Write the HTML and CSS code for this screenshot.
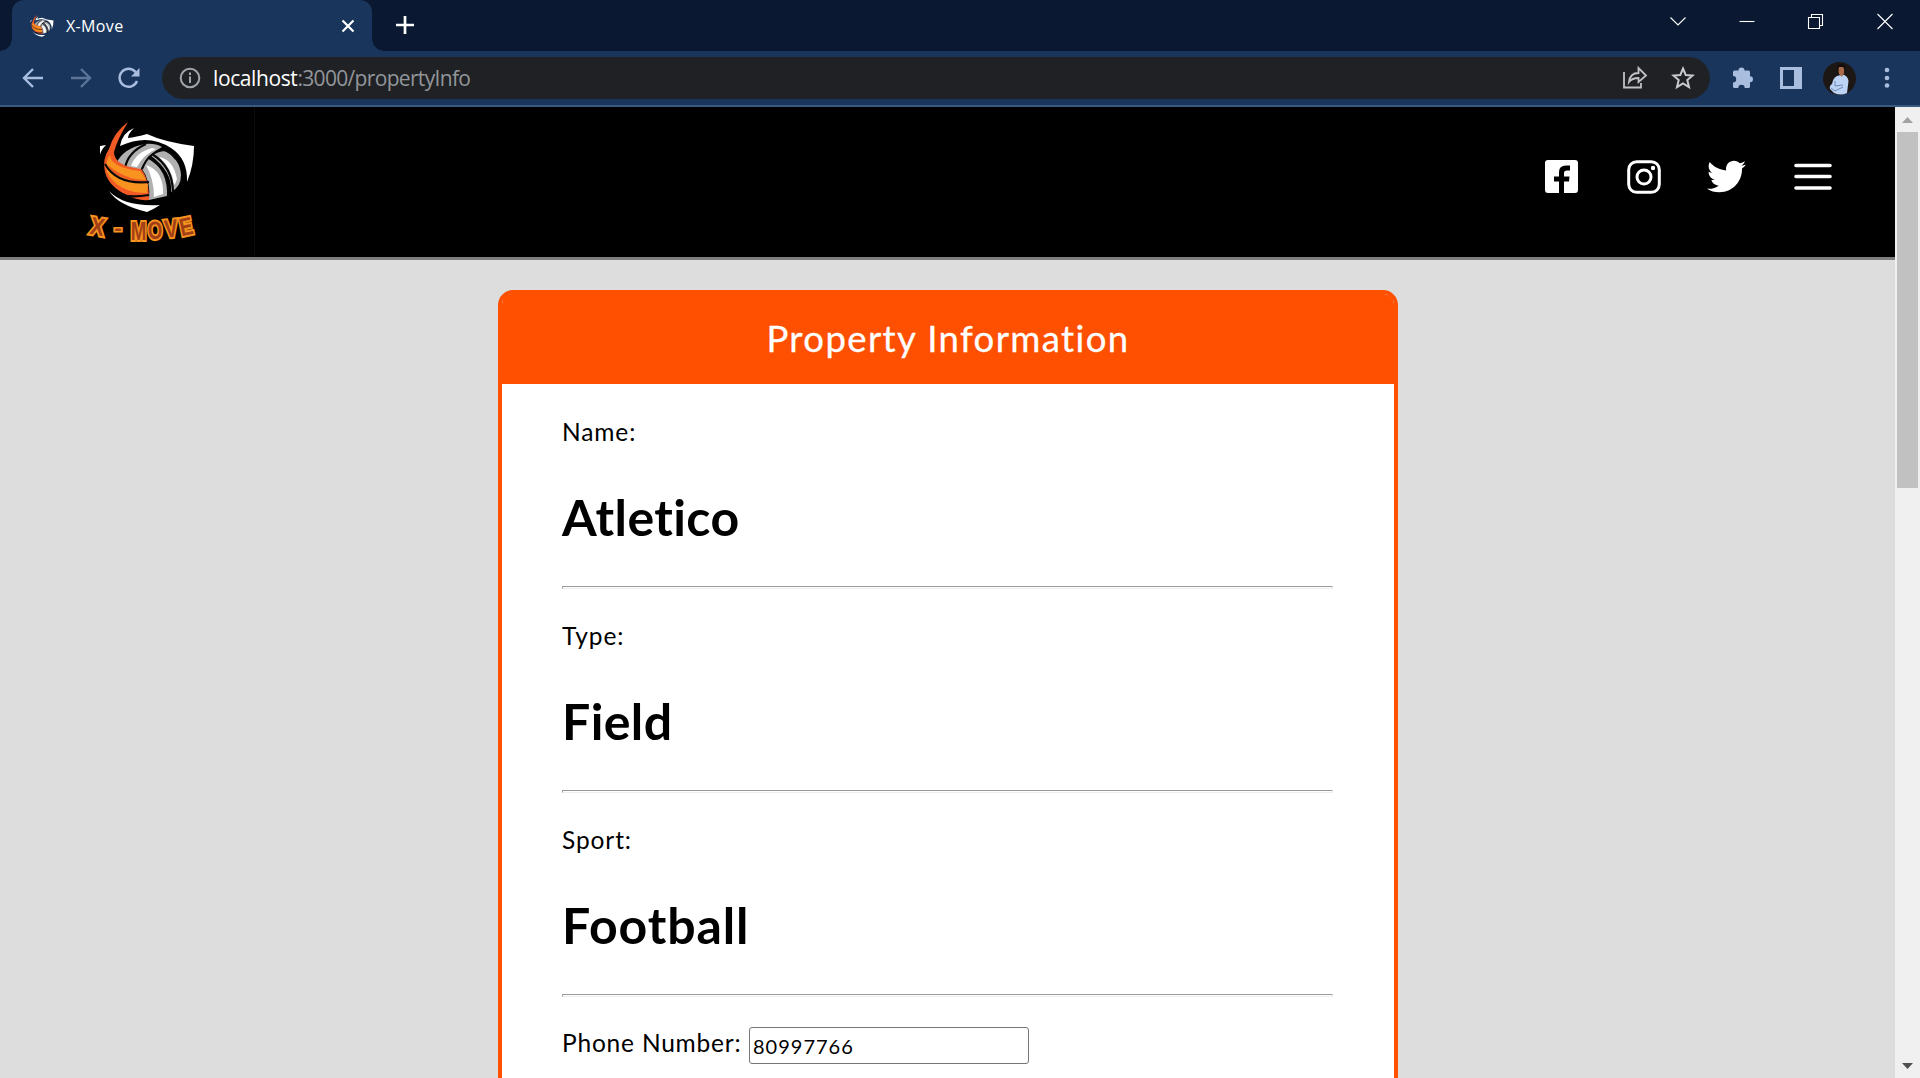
FILE: index.html
```html
<!DOCTYPE html>
<html lang="en">
<head>
<meta charset="utf-8">
<title>X-Move</title>
<link rel="stylesheet" href="styles.css">
</head>
<body>
<svg class="defs" width="0" height="0" aria-hidden="true">
  <symbol id="ball" viewBox="98 118 98 98">
    <path fill="#fff" d="M120 145Q122 132 134 127Q128 133 128 137Q136 136 147 133Q164 141 194 145Q194 164 187 181Q188 158 171 147Q148 132 120 145ZM100 145L106 144Q101 149 100 154ZM109 190Q124 206 160 204Q154 208 147 211Q118 204 109 190Z"/>
    <path fill="#b0b0b0" d="M116 163Q123 147 145 143Q155 142 162 146Q148 153 141 168Q128 169 116 163ZM150 154L163 149Q180 157 181 174Q181 186 171 191Q173 171 150 154ZM142 168L147 157Q171 170 167 195L149 199Q151 180 142 168Z"/>
    <path fill="#fff" d="M131 165Q136 151 152 147L156 148Q143 154 137 166ZM159 156Q173 158 177 178Q176 182 174 184Q172 167 159 156ZM146 164Q164 170 163 193L154 196Q154 178 146 164Z"/>
    <path fill="none" stroke="#080808" stroke-width="2.200" d="M125 167Q128 151 146 143M142 168Q149 150 165 149M148 156Q170 168 168 197M152 153Q173 166 173 192M164 149Q170 150 176 158"/>
    <path fill="#f15a24" d="M128 121Q118 137 114 151Q114 165 141 168Q149 177 149 199Q137 200 127 194Q109 186 105 171Q102 158 109 148Q114 131 128 121Z"/>
    <path fill="#f7931e" d="M110 154Q110 166 140 170Q144 174 146 179Q125 179 108 164Q111 177 148 183L147 192Q118 192 107 171Q105 160 110 154Z"/>
    <path fill="none" stroke="#080808" stroke-width="2.200" d="M105 163Q117 184 149 181M117 193Q130 197 149 194"/>
  </symbol>
</svg>

<div class="tabstrip">
  <div class="tab">
    <svg class="favicon"><use href="#ball"/></svg>
    <span class="tab-title">X-Move</span>
    <svg class="tab-close" viewBox="0 0 14 14"><path d="M1.5 1.500L12.500 12.500M12.500 1.500L1.500 12.500"/></svg>
  </div>
  <svg class="new-tab" viewBox="0 0 18 18"><path d="M9 0V18M0 9H18"/></svg>
  <div class="window-buttons">
    <svg viewBox="0 0 16 16"><path d="M.5 4.500L8 12L15.500 4.500"/></svg>
    <svg viewBox="0 0 16 16"><path d="M.5 8.500H15.500"/></svg>
    <svg viewBox="0 0 16 16"><path d="M.5 4.500H11.500V15.500H.5ZM3.500 4V1.500H14.500V12.500H12"/></svg>
    <svg viewBox="0 0 16 16"><path d="M.5 1L15.500 16M15.500 1L.5 16"/></svg>
  </div>
</div>

<div class="toolbar">
  <div class="nav">
    <svg viewBox="0 0 20 20"><path d="M20 10H1.500M10 1L1 10L10 19"/></svg>
    <svg class="dim" viewBox="0 0 20 20"><path d="M0 10H18.500M10 1L19 10L10 19"/></svg>
    <svg viewBox="0 0 20 20"><path d="M18 13A9 9 0 1 1 16.500 4L18 6"/><path class="solid" d="M20.500 0V8.500H12Z"/></svg>
  </div>
  <div class="omnibox">
    <svg class="info" viewBox="0 0 22 22"><circle cx="11" cy="11" r="9.300"/><path d="M11 9.500V16M11 5.500V8"/></svg>
    <div class="url"><span class="host">localhost</span>:3000/propertyInfo</div>
    <svg class="share" viewBox="0 0 24 24"><path d="M1 6V21.500H18V17M6 16Q7 7 15.500 7V2L23 9.500L15.500 16V12Q9 12 6 16Z"/></svg>
    <svg class="star" viewBox="0 0 24 24"><path d="M12 2.500L14.700 9L21.500 9.500L16.300 14L18 21L12 17.300L6 21L7.700 14L2.500 9.500L9.300 9Z"/></svg>
  </div>
  <svg class="puzzle" viewBox="0 0 22 22"><path d="M2.500 3.500H6.500A3 3 0 0 1 12.500 3.500H16.500Q18 3.500 18 5V9.300A3 3 0 0 1 18 15.300V19.500Q18 21 16.500 21H12.700A3.200 3.200 0 0 0 6.300 21H2.500Q1 21 1 19.500V15.500A3.200 3.200 0 0 0 1 9.100V5Q1 3.500 2.500 3.500Z"/></svg>
  <svg class="panel" viewBox="0 0 22 22"><path d="M0 0H22V22H0ZM3 3V19H14V3Z"/></svg>
  <svg class="avatar" viewBox="0 0 33 33">
    <circle cx="16.500" cy="16.500" r="16.500" fill="#1c1714"/>
    <path fill="#bcd3f6" d="M14 14L20 12.500Q25 14 25.500 19L24 31Q18 34 11 31L7 27Q6 24 9 22Q10 16 14 14Z"/>
    <path fill="#a96b4c" d="M15 5H21V11L19 15L16 12Z"/>
    <path fill="#120c0a" d="M14 7Q14 2 19 2Q23 3 22 8L20 5H16L15 9Z"/>
    <path fill="none" stroke="#7188b3" d="M12 19L12 24L20 23M8 26L12 29L20 25"/>
  </svg>
  <svg class="dots" viewBox="0 0 6 22"><circle cx="3" cy="3" r="2.300"/><circle cx="3" cy="11" r="2.300"/><circle cx="3" cy="18.500" r="2.300"/></svg>
</div>

<div class="viewport">
  <div class="page">
    <header class="site-header">
      <div class="brand">
        <svg class="logo"><use href="#ball"/></svg>
        <div class="wordmark"><span class="w1">X</span><span class="w2">-</span><span class="w3">M</span><span class="w4">O</span><span class="w5">V</span><span class="w6">E</span></div>
      </div>
      <nav class="social">
        <svg class="fb" viewBox="0 0 33 33"><path d="M3 0H30Q33 0 33 3V30Q33 33 30 33H19V21.500H24L24.500 16.500H19V13Q19 10.500 22 10.500H25V5.500H21Q14 5.500 14 12V16.500H9V21.500H14V33H3Q0 33 0 30V3Q0 0 3 0Z"/></svg>
        <svg class="ig" viewBox="0 0 34 34"><rect x="1.700" y="1.700" width="30.600" height="30.600" rx="8"/><circle cx="17" cy="17" r="7"/><circle class="solid" cx="26" cy="8" r="2.200"/></svg>
        <svg class="tw" viewBox="0 0 512 512"><path d="M459.370 151.716c.325 4.548.325 9.097.325 13.645 0 138.720-105.583 298.558-298.558 298.558-59.452 0-114.680-17.219-161.137-47.106 8.447.974 16.568 1.299 25.340 1.299 49.055 0 94.213-16.568 130.274-44.832-46.132-.975-84.792-31.188-98.112-72.772 6.498.974 12.995 1.624 19.818 1.624 9.421 0 18.843-1.300 27.614-3.573-48.081-9.747-84.143-51.980-84.143-102.985v-1.299c13.969 7.797 30.214 12.670 47.431 13.319-28.264-18.843-46.781-51.005-46.781-87.391 0-19.492 5.197-37.360 14.294-52.954 51.655 63.675 129.300 105.258 216.365 109.807-1.624-7.797-2.599-15.918-2.599-24.040 0-57.828 46.782-104.934 104.934-104.934 30.213 0 57.502 12.670 76.670 33.137 23.715-4.548 46.456-13.320 66.599-25.340-7.798 24.366-24.366 44.833-46.132 57.827 21.117-2.273 41.584-8.122 60.426-16.243-14.292 20.791-32.161 39.308-52.628 54.253z"/></svg>
        <svg class="menu" viewBox="0 0 38 28"><path d="M2 2.500H36M2 13.500H36M2 25H36"/></svg>
      </nav>
    </header>
    <main class="card">
      <h1 class="card-title">Property Information</h1>
      <div class="card-body">
        <div class="field"><span class="label">Name:</span><h2 class="value">Atletico</h2></div>
        <hr>
        <div class="field"><span class="label">Type:</span><h2 class="value">Field</h2></div>
        <hr>
        <div class="field"><span class="label">Sport:</span><h2 class="value wide">Football</h2></div>
        <hr>
        <div class="phone-row"><label class="label phone" for="phone">Phone Number:</label><input id="phone" type="text" value="80997766"></div>
      </div>
    </main>
  </div>
  <div class="scrollbar">
    <svg viewBox="0 0 11 6"><path fill="#a3a3a3" d="M0 6L5.500 0L11 6Z"/></svg>
    <div class="thumb"></div>
    <svg viewBox="0 0 11 6"><path fill="#505050" d="M0 0L5.500 6L11 0Z"/></svg>
  </div>
</div>
</body>
</html>
```

FILE: styles.css
```css
* { box-sizing: border-box; }
body {
  margin: 0;
  height: 1078px;
  overflow: hidden;
  display: flex;
  flex-direction: column;
  font-family: Lato, "Noto Sans", sans-serif;
  font-variant-ligatures: none;
}
svg { display: block; flex: none; fill: none; overflow: visible; }
.defs { position: absolute; }

/* Browser frame */
.tabstrip {
  height: 51px;
  flex: none;
  display: flex;
  background: #0a1931;
  padding-left: 12px;
}
.tab {
  width: 360px;
  height: 51px;
  display: flex;
  align-items: center;
  padding: 0 17px 0 18px;
  background: #1a355b;
  border-radius: 12px 12px 0 0;
  position: relative;
}
.tab::before, .tab::after {
  content: "";
  position: absolute;
  bottom: 0;
  width: 12px;
  height: 12px;
}
.tab::before { left: -12px; background: radial-gradient(circle at 0 0, #0a1931 11.5px, #1a355b 12px); }
.tab::after { right: -12px; background: radial-gradient(circle at 100% 0, #0a1931 11.5px, #1a355b 12px); }
.favicon { width: 24px; height: 24px; }
.tab-title {
  flex: 1;
  margin-left: 12px;
  color: #fff;
  font: 16px "Open Sans", sans-serif;
  letter-spacing: 0.35px;
}
.tab-close { width: 14px; height: 14px; stroke: #fff; stroke-width: 2.2; }
.new-tab { width: 18px; height: 18px; margin: 16px 0 0 24px; stroke: #fff; stroke-width: 2.7; }
.window-buttons { margin: 13px 27px 0 auto; display: flex; gap: 53px; }
.window-buttons svg { width: 16px; height: 16px; stroke: #fff; stroke-width: 1.1; }

.toolbar {
  height: 56px;
  flex: none;
  display: flex;
  align-items: center;
  padding: 0 30px 0 23px;
  background: #1a355b;
  border-bottom: 2px solid #3b5a80;
}
.nav { display: flex; gap: 28px; width: 139px; }
.nav svg { width: 20px; height: 20px; stroke: #a9bddf; stroke-width: 2.4; }
.nav .dim { stroke: #5b7498; }
.nav .solid { fill: #a9bddf; stroke: none; }
.omnibox {
  width: 1548px;
  height: 42px;
  border-radius: 21px;
  background: #202124;
  display: flex;
  align-items: center;
  padding: 0 15px 0 17px;
}
.info { width: 22px; height: 22px; stroke: #a0a5ab; stroke-width: 2; }
.url {
  flex: 1;
  margin-left: 12px;
  color: #92969b;
  font: 21px "Open Sans", sans-serif;
  letter-spacing: -0.67px;
}
.host { color: #fff; letter-spacing: -0.4px; }
.share { width: 24px; height: 24px; stroke: #bfc1c4; stroke-width: 1.8; }
.star { width: 24px; height: 24px; margin-left: 24px; stroke: #c8cacd; stroke-width: 2; }
.puzzle { width: 22px; height: 22px; margin-left: 22px; fill: #a9bddf; }
.panel { width: 22px; height: 22px; margin-left: 26px; fill: #a9bddf; fill-rule: evenodd; }
.avatar { width: 33px; height: 33px; margin-left: 21px; }
.dots { width: 6px; height: 22px; margin-left: 28px; fill: #a9bddf; }

/* Page */
.viewport { flex: 1; display: flex; min-height: 0; }
.page { flex: 1; background: #ddd; overflow: hidden; }
.site-header {
  height: 153px;
  background: #000;
  border-bottom: 3px solid #807d80;
  display: flex;
  justify-content: space-between;
}
.brand {
  width: 255px;
  border-right: 1px solid #0d0d0d;
  padding: 12px 0 0 98px;
}
.logo { width: 98px; height: 98px; }
.wordmark {
  display: flex;
  margin: -4px 0 0 -9px;
  font: bold 25px/28px "Liberation Sans", sans-serif;
  color: #a33f17;
  -webkit-text-stroke: 4px #f7931e;
  paint-order: stroke fill;
}
.wordmark span { width: 17px; display: flex; justify-content: center; }
.wordmark .w1 { transform: translateY(-1px) rotate(10deg) scale(0.85, 1); width: 17px; }
.wordmark .w2 { transform: translateY(1px) scale(0.9, 0.8); width: 24px; }
.wordmark .w3 { transform: translateY(4px) scale(0.75, 1); }
.wordmark .w4 { transform: translateY(3px) rotate(-3deg) scale(0.75, 1); width: 16px; }
.wordmark .w5 { transform: translateY(1px) rotate(-6deg) scale(0.8, 1); width: 16px; }
.wordmark .w6 { transform: translateY(-1px) rotate(-12deg) scale(0.78, 1); width: 14px; }
.social { display: flex; padding: 53px 63px 0 0; }
.fb { width: 33px; height: 33px; fill: #fff; }
.ig { width: 34px; height: 34px; margin-left: 49px; stroke: #fff; stroke-width: 3; }
.ig .solid { fill: #fff; stroke: none; }
.tw { width: 39px; height: 39px; margin: -3px 0 0 46px; fill: #fff; }
.menu { width: 38px; height: 28px; margin: 3px 0 0 48px; stroke: #fff; stroke-width: 3.6; stroke-linecap: round; }

.card {
  width: 900px;
  height: 1100px;
  margin: 30px 0 0 498px;
  background: #fff;
  border: 4px solid #ff4f00;
  border-radius: 15px;
}
.card-title {
  margin: 0;
  height: 90px;
  background: #ff4f00;
  border-radius: 10px 10px 0 0;
  color: #fff;
  text-align: center;
  font-weight: 400;
  font-size: 36.5px;
  line-height: 88px;
  letter-spacing: 1.4px;
  -webkit-text-stroke: 0.3px #fff;
}
.card-body { padding: 30px 61px 0 60px; }
.field { height: 172px; }
.label {
  display: block;
  font-size: 24.5px;
  line-height: 36px;
  letter-spacing: 0.9px;
}
.value {
  margin: 37px 0 0;
  font-size: 50px;
  line-height: 60px;
  font-weight: 700;
  letter-spacing: 0.4px;
}
.wide { letter-spacing: 0.9px; }
hr {
  margin: 0 0 29px;
  height: 3px;
  border: 1px solid;
  border-color: #9a9a9a #eee #eee #9a9a9a;
}
.phone-row { display: flex; margin-top: 2px; padding-top: 1px; }
.phone { width: 187px; white-space: nowrap; line-height: 32px; letter-spacing: 0.8px; }
input {
  width: 280px;
  height: 37px;
  padding: 0 3px;
  border: 1px solid #767676;
  border-radius: 3px;
  font: 20px Lato, sans-serif;
  letter-spacing: 1px;
}

.scrollbar {
  width: 25px;
  background: #f0f0f0;
  display: flex;
  flex-direction: column;
  align-items: center;
  padding: 10px 0 9px;
}
.scrollbar svg { width: 11px; height: 6px; }
.thumb { width: 21px; height: 356px; margin: 9px 0 auto; background: #c1c1c1; }
```
